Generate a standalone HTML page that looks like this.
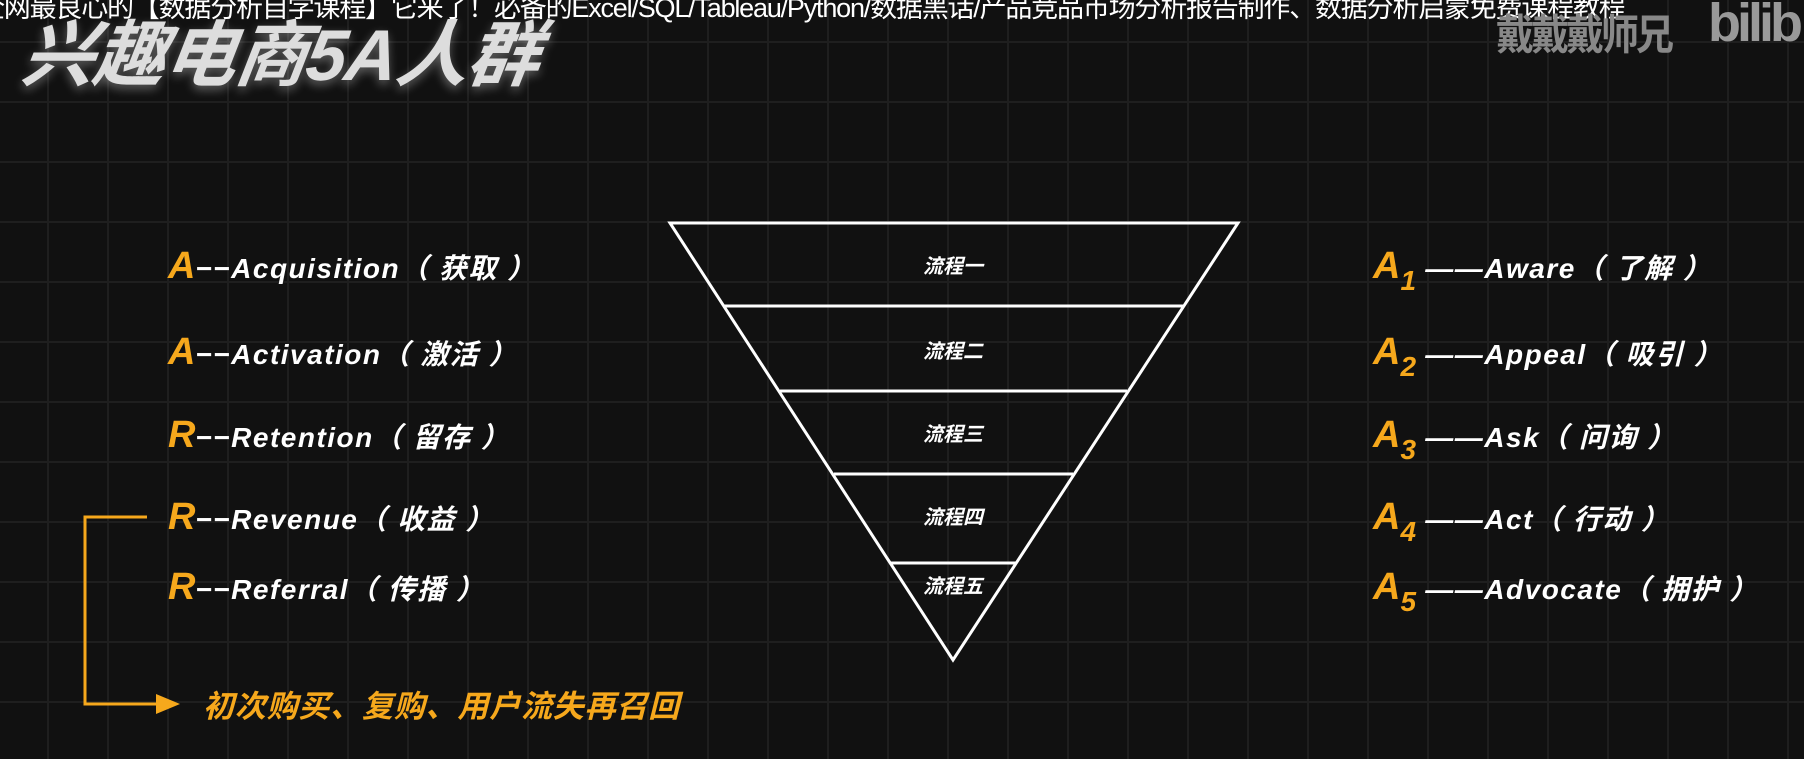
<!DOCTYPE html>
<html><head><meta charset="utf-8"><style>
*{margin:0;padding:0;box-sizing:border-box}
body{width:1804px;height:759px;overflow:hidden;position:relative;
background-color:#111;
background-image:linear-gradient(90deg,#1f1f1f 2px,transparent 2px),linear-gradient(#1f1f1f 2px,transparent 2px);
background-size:60px 60px;background-position:47px 41px;
font-family:"Liberation Sans","Noto Sans CJK SC",sans-serif}
.t{position:absolute;white-space:nowrap;font-weight:bold;font-style:italic;color:#fff}
.o{color:#f6a81c}
.row{font-size:28px;line-height:36px;letter-spacing:1.5px}
.row .o{font-size:38px;letter-spacing:0}
sub{font-size:28px;vertical-align:-12px;font-style:italic}
.fl{position:absolute;width:120px;text-align:center;left:893px;font-size:20px;color:#fff;font-weight:bold;font-style:italic;line-height:22px}
</style></head><body>
<div class="t" style="left:-22px;top:-14px;font-size:27px;font-weight:normal;font-style:normal;letter-spacing:-1.2px">全网最良心的【数据分析自学课程】它来了！必备的Excel/SQL/Tableau/Python/数据黑话/产品竞品市场分析报告制作、数据分析启蒙免费课程教程</div>
<div class="t" style="left:24px;top:-4px;font-size:72px;color:#ddd;text-shadow:0 4px 10px rgba(255,255,255,.35);letter-spacing:-1px;transform:skewX(-8deg)">兴趣电商5A人群</div>
<div class="t" style="left:1496px;top:4px;font-size:38px;color:#888;font-style:normal;letter-spacing:-3px;transform:scaleY(1.1)">戴戴戴师兄</div>
<div class="t" style="left:1708px;top:-8px;font-size:54px;color:#999;font-style:normal;letter-spacing:-4px">bilib</div>

<div class="t row" style="left:168px;top:248px"><span class="o">A</span>−−Acquisition（ 获取 ）</div>
<div class="t row" style="left:168px;top:334px"><span class="o">A</span>−−Activation（ 激活 ）</div>
<div class="t row" style="left:168px;top:417px"><span class="o">R</span>−−Retention（ 留存 ）</div>
<div class="t row" style="left:168px;top:499px"><span class="o">R</span>−−Revenue（ 收益 ）</div>
<div class="t row" style="left:168px;top:569px"><span class="o">R</span>−−Referral（ 传播 ）</div>

<div class="t row" style="left:1373px;top:248px"><span class="o">A<sub>1</sub></span> ——Aware（ 了解 ）</div>
<div class="t row" style="left:1373px;top:334px"><span class="o">A<sub>2</sub></span> ——Appeal（ 吸引 ）</div>
<div class="t row" style="left:1373px;top:417px"><span class="o">A<sub>3</sub></span> ——Ask（ 问询 ）</div>
<div class="t row" style="left:1373px;top:499px"><span class="o">A<sub>4</sub></span> ——Act（ 行动 ）</div>
<div class="t row" style="left:1373px;top:569px"><span class="o">A<sub>5</sub></span> ——Advocate（ 拥护 ）</div>

<svg style="position:absolute;left:0;top:0" width="1804" height="759">
<g stroke="#fff" stroke-width="3" fill="none">
<path d="M670 223 L1238 223 L953 660 Z"/>
<line x1="724" y1="306" x2="1184" y2="306"/>
<line x1="780" y1="391" x2="1127" y2="391"/>
<line x1="834" y1="474" x2="1073" y2="474"/>
<line x1="891" y1="563" x2="1016" y2="563"/>
</g>
<path d="M147 517 H85 V704 H160" stroke="#f6a81c" stroke-width="3" fill="none"/>
<path d="M156 694 L180 704 L156 714 Z" fill="#f6a81c"/>
</svg>
<div class="fl" style="top:256px">流程一</div>
<div class="fl" style="top:341px">流程二</div>
<div class="fl" style="top:424px">流程三</div>
<div class="fl" style="top:507px">流程四</div>
<div class="fl" style="top:576px">流程五</div>
<div class="t o" style="left:203px;top:689px;font-size:31px;line-height:36px;letter-spacing:0.8px">初次购买、复购、用户流失再召回</div>
</body></html>
